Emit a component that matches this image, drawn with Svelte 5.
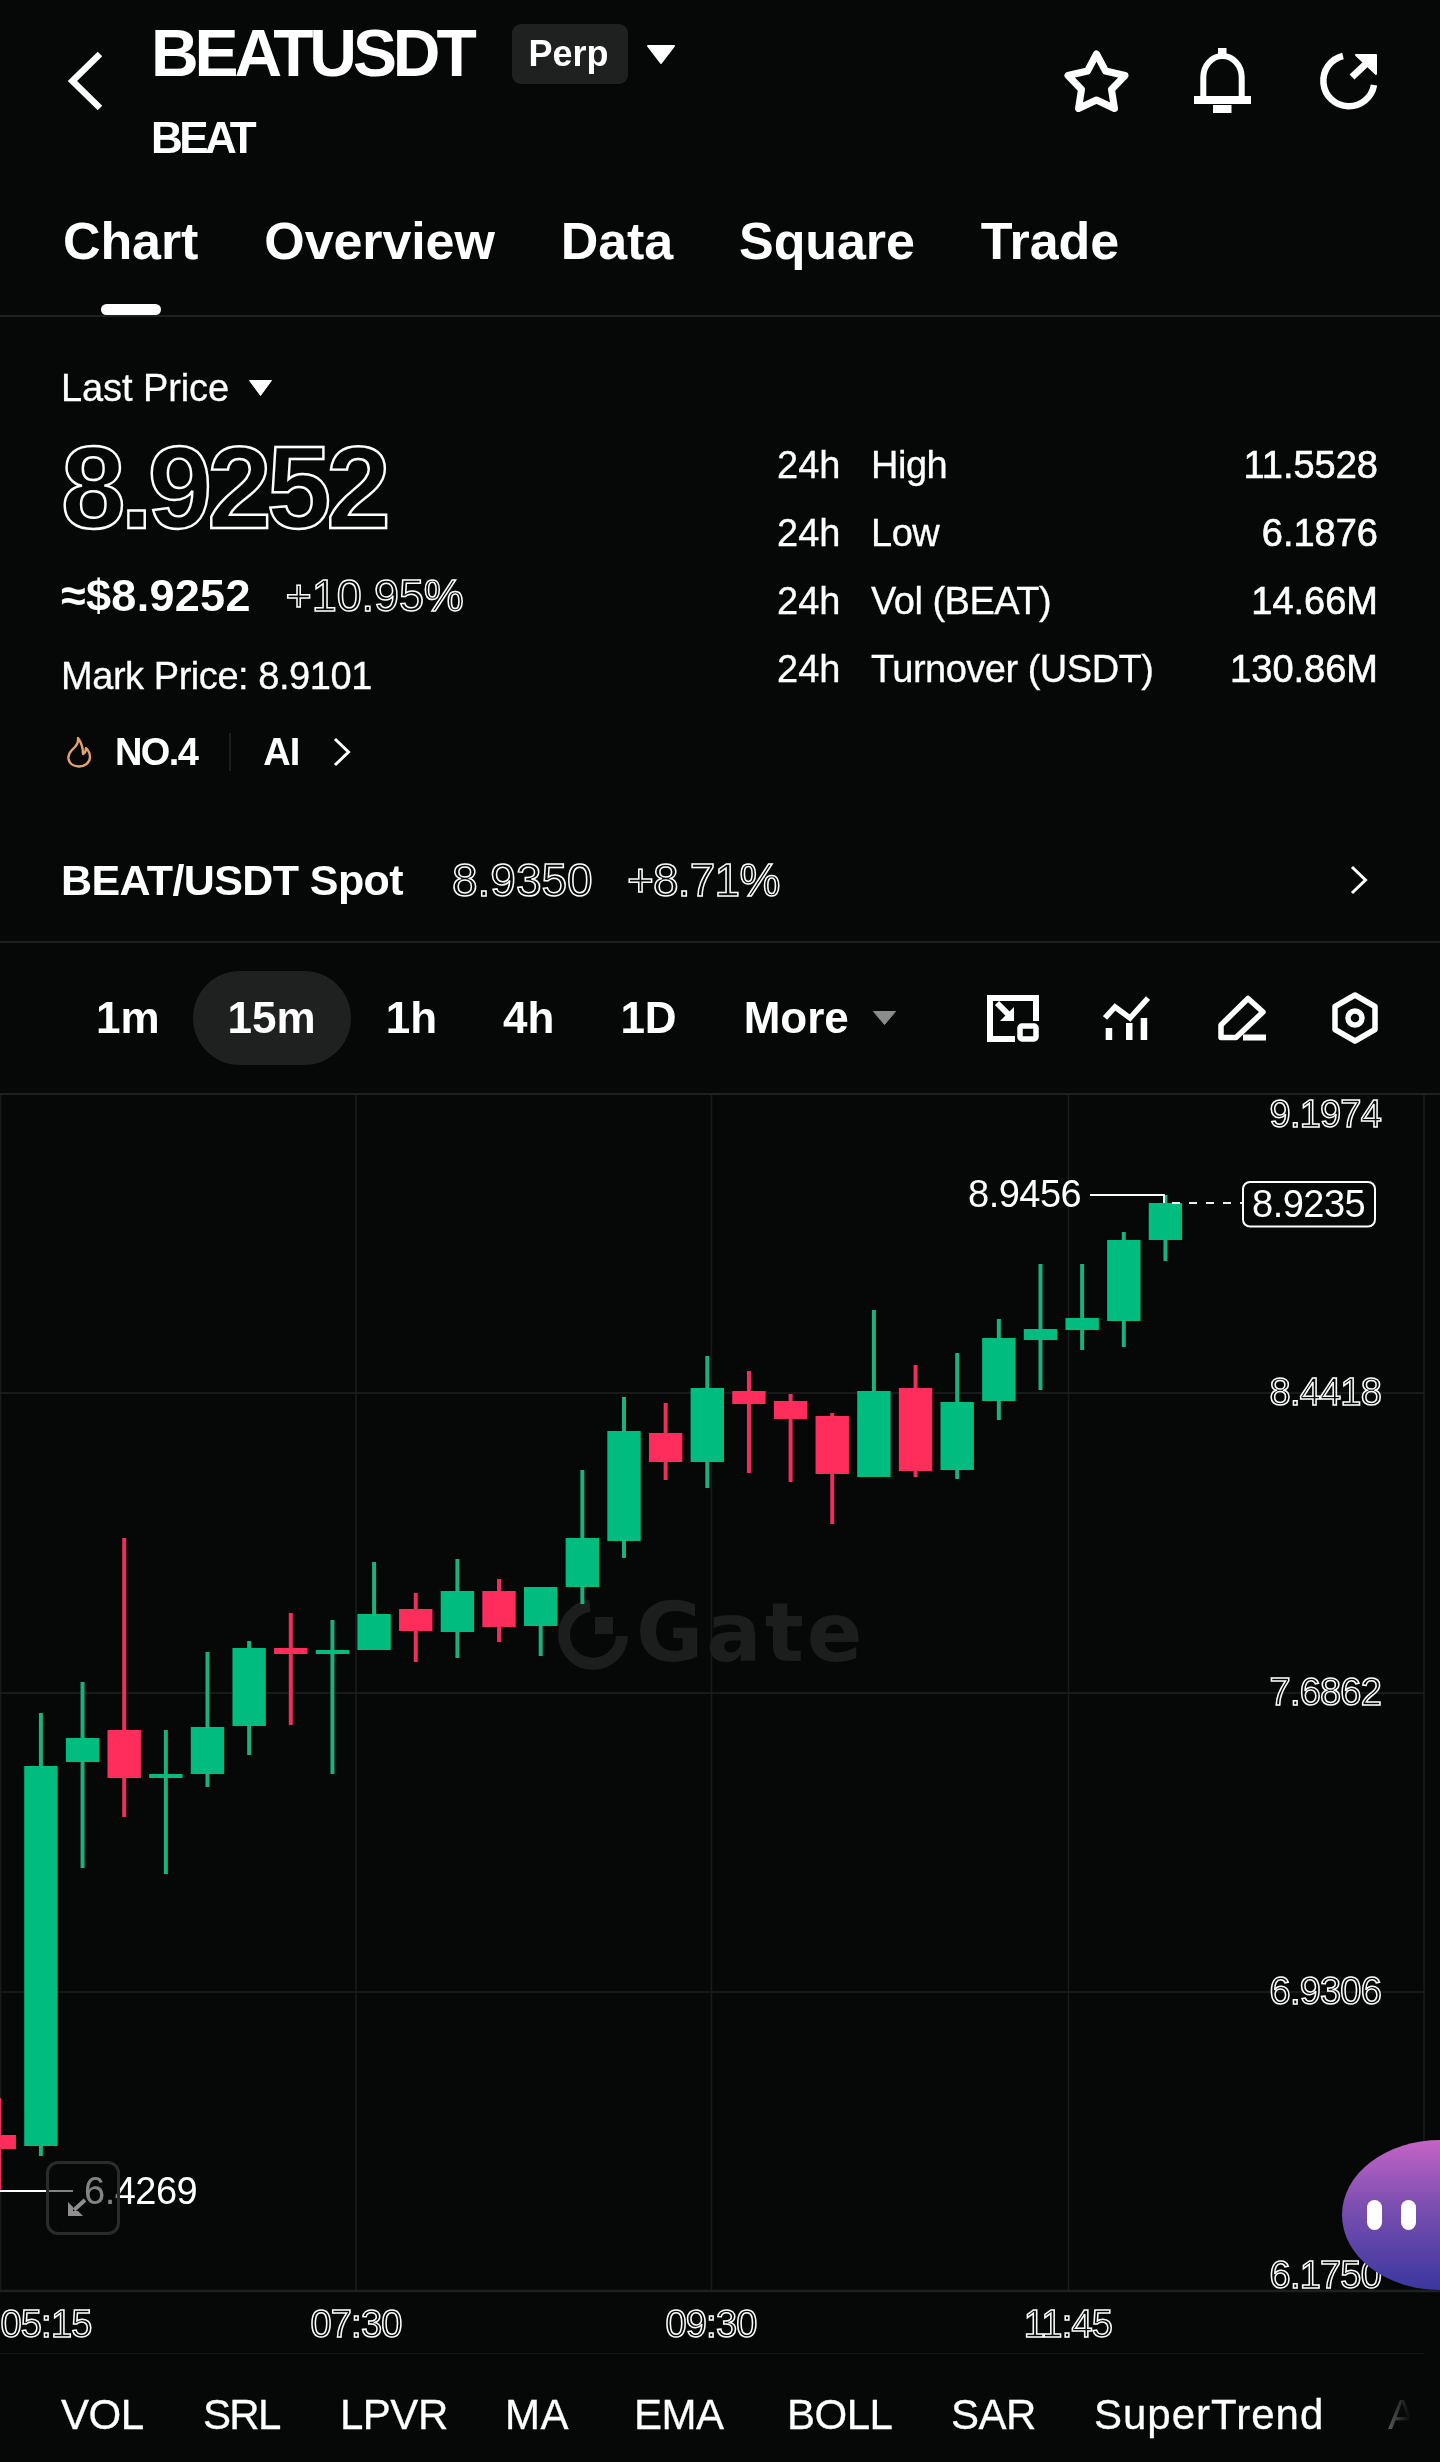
<script lang="ts">
  const tabs = ['Chart', 'Overview', 'Data', 'Square', 'Trade'];
  const stats = [
    { label: 'High', value: '11.5528' },
    { label: 'Low', value: '6.1876' },
    { label: 'Vol (BEAT)', value: '14.66M' },
    { label: 'Turnover (USDT)', value: '130.86M' }
  ];
  const periods = ['1m', '15m', '1h', '4h', '1D'];
  const indicators = ['VOL', 'SRL', 'LPVR', 'MA', 'EMA', 'BOLL', 'SAR', 'SuperTrend'];

  // y values are page pixels: [wick top, body top, body bottom, wick bottom, red?]
  const candles: [number, number, number, number, boolean][] = [
    [2098, 2135, 2149, 2190, true],
    [1713, 1766, 2146, 2156, false],
    [1682, 1738, 1762, 1868, false],
    [1538, 1730, 1778, 1817, true],
    [1730, 1774, 1778, 1874, false],
    [1652, 1727, 1774, 1787, false],
    [1641, 1648, 1726, 1755, false],
    [1613, 1648, 1654, 1725, true],
    [1620, 1650, 1654, 1774, false],
    [1562, 1614, 1650, 1650, false],
    [1593, 1609, 1631, 1662, true],
    [1559, 1591, 1632, 1658, false],
    [1579, 1591, 1627, 1642, true],
    [1587, 1587, 1626, 1656, false],
    [1470, 1538, 1587, 1604, false],
    [1397, 1431, 1541, 1558, false],
    [1403, 1433, 1462, 1480, true],
    [1356, 1388, 1462, 1488, false],
    [1371, 1391, 1404, 1473, true],
    [1394, 1401, 1419, 1482, true],
    [1413, 1416, 1474, 1524, true],
    [1310, 1391, 1477, 1477, false],
    [1365, 1388, 1471, 1477, true],
    [1353, 1402, 1470, 1479, false],
    [1319, 1338, 1401, 1420, false],
    [1264, 1329, 1340, 1390, false],
    [1264, 1318, 1330, 1350, false],
    [1232, 1240, 1321, 1347, false],
    [1195, 1203, 1240, 1261, false]
  ];
  const candleX = (i: number) => -0.75 + 41.65 * i;

  const gridX = [0.5, 356, 711.5, 1068.5, 1424];
  const gridY = [1393, 1693, 1992];
  const prices = [
    { text: '9.1974', y: 1127 },
    { text: '8.4418', y: 1405 },
    { text: '7.6862', y: 1705 },
    { text: '6.9306', y: 2004 },
    { text: '6.1750', y: 2288 }
  ];
  const times = [
    { text: '05:15', x: 46 },
    { text: '07:30', x: 356 },
    { text: '09:30', x: 711 },
    { text: '11:45', x: 1068 }
  ];
</script>

<div class="page">
  <header>
    <div class="top">
      <svg class="back" width="34" height="60" viewBox="0 0 34 60"><path d="M32 3 L4.5 30 L32 57" fill="none" stroke="#fff" stroke-width="6.5" /></svg>
      <div class="title">
        <h1>BEATUSDT</h1>
        <div class="coin">BEAT</div>
      </div>
      <span class="badge">Perp</span>
      <svg class="caret" width="30" height="21" viewBox="0 0 30 21"><path d="M2 2 H28 L15 19 Z" fill="#fff" stroke="#fff" stroke-width="2" stroke-linejoin="round" /></svg>
      <div class="actions">
        <svg width="65" height="62" viewBox="0 0 65 62"><path d="M32.5 4 L41.5 21 L61 25.5 L47.5 39.5 L50.5 58.5 L32.5 50 L14.5 58.5 L17.5 39.5 L4 25.5 L23.5 21 Z" fill="none" stroke="#fff" stroke-width="7" stroke-linejoin="round" /></svg>
        <svg width="57" height="65" viewBox="0 0 57 65">
          <rect x="24" y="0" width="8.5" height="8" fill="#fff" />
          <path d="M9.3 49 V29 A19.2 21 0 0 1 47.7 29 V49" fill="none" stroke="#fff" stroke-width="6" />
          <rect x="0" y="48" width="57" height="8" fill="#fff" />
          <rect x="19" y="57" width="18.5" height="8" fill="#fff" />
        </svg>
        <svg class="share" width="59" height="58" viewBox="0 0 59 58">
          <path d="M24 4 A25.5 25.5 0 1 0 55 33" fill="none" stroke="#fff" stroke-width="6.5" />
          <path d="M33 25 L50 9" stroke="#fff" stroke-width="7" />
          <path d="M37 3 H57 V22 Z" fill="#fff" stroke="#fff" stroke-width="2" stroke-linejoin="round" />
        </svg>
      </div>
    </div>
    <nav>
      {#each tabs as tab, i}
        <span class="tab" class:active={i === 0}>{tab}</span>
      {/each}
    </nav>
  </header>

  <section class="stats">
    <div class="columns">
      <div class="left">
        <div class="last">Last Price
          <svg width="25" height="18" viewBox="0 0 25 18"><path d="M1.5 1.5 H23.5 L12.5 16.5 Z" fill="#fff" stroke="#fff" stroke-linejoin="round" /></svg>
        </div>
        <div class="price">8.9252</div>
        <div class="fiat">≈$8.9252 <span class="change">+10.95%</span></div>
        <div class="mark">Mark Price: 8.9101</div>
        <div class="rank">
          <svg class="flame" width="26" height="32" viewBox="0 0 26 32"><path d="M12 2 C13 8 9 11 6 14 C3 17 2 20 2.5 23 C3.5 28 8 30.5 13 30.5 C18.5 30.5 24 27 24 21 C24 17 22 14 20 12 C20 15 19 17 17 18 C17 12 15 6 12 2 Z" fill="none" stroke="#e5a271" stroke-width="2.4" stroke-linejoin="round" /></svg>
          <span class="no">NO.4</span>
          <span class="sep"></span>
          <span class="ai">AI</span>
          <svg width="18" height="30" viewBox="0 0 18 30"><path d="M2 2 L15.5 15 L2 28" fill="none" stroke="#fff" stroke-width="3" /></svg>
        </div>
      </div>
      <div class="right">
        {#each stats as row}
          <div class="row">
            <span class="period">24h</span>
            <span class="label">{row.label}</span>
            <span class="value">{row.value}</span>
          </div>
        {/each}
      </div>
    </div>
    <div class="spot">
      <span class="pair">BEAT/USDT Spot</span>
      <span class="spot-price">8.9350</span>
      <span class="spot-change">+8.71%</span>
      <svg width="18" height="30" viewBox="0 0 18 30"><path d="M2 2 L15.5 15 L2 28" fill="none" stroke="#fff" stroke-width="3" /></svg>
    </div>
  </section>

  <section class="toolbar">
    {#each periods as p, i}
      <span class="period-btn" class:on={i === 1}>{p}</span>
    {/each}
    <span class="more">More
      <svg width="25" height="16" viewBox="0 0 25 16"><path d="M1.5 1.5 H23.5 L12.5 14.5 Z" fill="#8c8c8c" stroke="#8c8c8c" stroke-linejoin="round" /></svg>
    </span>
    <div class="tools">
      <svg width="52" height="47" viewBox="0 0 52 47">
        <path d="M49 26 V3 H3 V44 H28" fill="none" stroke="#fff" stroke-width="6" />
        <rect x="33" y="31" width="16" height="13" rx="2" fill="none" stroke="#fff" stroke-width="5.5" />
        <path d="M10 8 L24 22" stroke="#fff" stroke-width="6" />
        <path d="M27 12 V26 H13 Z" fill="#fff" />
      </svg>
      <svg class="lines" width="47" height="45" viewBox="0 0 47 45">
        <path d="M2 22 L12 11 L27 22 L45 2" fill="none" stroke="#fff" stroke-width="5.5" />
        <rect x="2.7" y="32" width="6.5" height="12" fill="#fff" />
        <rect x="23" y="27" width="6.5" height="17" fill="#fff" />
        <rect x="37.7" y="22" width="6.5" height="22" fill="#fff" />
      </svg>
      <svg width="48" height="46" viewBox="0 0 48 46">
        <path d="M3 42.5 V30 L30 3.5 L45 17 L18 42.5 Z" fill="none" stroke="#fff" stroke-width="5.5" stroke-linejoin="round" />
        <rect x="25" y="39.5" width="23" height="6" fill="#fff" />
      </svg>
      <svg width="46" height="52" viewBox="0 0 46 52">
        <path d="M23 3 L43 14.5 V37.5 L23 49 L3 37.5 V14.5 Z" fill="none" stroke="#fff" stroke-width="5.5" stroke-linejoin="round" />
        <circle cx="23" cy="26" r="7" fill="none" stroke="#fff" stroke-width="5.5" />
      </svg>
    </div>
  </section>

  <section class="chart">
    <svg width="1440" height="1261" viewBox="0 1093 1440 1261">
      {#each gridX as x}
        <line x1={x} x2={x} y1="1093" y2="2291" stroke="#1a1c1c" stroke-width="1.5" />
      {/each}
      {#each gridY as y}
        <line x1="0" x2="1424" y1={y} y2={y} stroke="#1f2121" stroke-width="1.5" />
      {/each}
      <line x1="0" x2="1440" y1="1094" y2="1094" stroke="#1e2020" stroke-width="2" />
      <line x1="0" x2="1440" y1="2291" y2="2291" stroke="#1e2020" stroke-width="2.5" />
      <line x1="0" x2="1424" y1="2354" y2="2354" stroke="#171919" stroke-width="1.5" />

      <!-- watermark -->
      <path d="M590 1606 A29 29 0 1 0 622 1636" fill="none" stroke="#1c1e1e" stroke-width="12" />
      <rect x="595" y="1617" width="18" height="17" fill="#1c1e1e" />
      <text class="mark-text" x="636" y="1661">Gate</text>

      {#each candles as [hi, top, bottom, lo, red], i}
        <rect x={candleX(i) - 2} y={hi} width="4" height={lo - hi} fill={red ? '#ec2f5c' : '#1cb07c'} />
        <rect x={candleX(i) - 16.7} y={top} width="33.4" height={bottom - top} fill={red ? '#ff2d5b' : '#00bc7e'} />
      {/each}

      {#each prices as p}
        <text class="axis" x="1381" y={p.y} text-anchor="end">{p.text}</text>
      {/each}
      {#each times as t}
        <text class="axis" x={t.x} y="2337" text-anchor="middle">{t.text}</text>
      {/each}

      <text class="note" x="968" y="1207">8.9456</text>
      <path d="M1090 1195 H1164 V1203" fill="none" stroke="#fff" stroke-width="1.8" />
      <line x1="1172" x2="1242" y1="1203" y2="1203" stroke="#eee" stroke-width="2" stroke-dasharray="8 9" />
      <rect x="1243" y="1182" width="132" height="44.5" rx="7" fill="#060808" stroke="#fff" stroke-width="2" />
      <text class="note" x="1252" y="1217">8.9235</text>

      <line x1="0" x2="73" y1="2191" y2="2191" stroke="#fff" stroke-width="1.8" />
      <text class="note" x="84" y="2204">6.4269</text>
    </svg>

    <div class="expand">
      <svg width="20" height="19" viewBox="0 0 20 19">
        <path d="M18 2 L7 12" stroke="#8f8f8f" stroke-width="4" />
        <path d="M1 4 V18 H16 L11 13 H6 V9 Z" fill="#8f8f8f" />
      </svg>
    </div>
    <div class="bot"><i></i><i></i></div>
  </section>

  <footer>
    {#each indicators as name}
      <span>{name}</span>
    {/each}
    <span class="cut">A</span>
  </footer>
</div>

<style>
  :global(body) {
    background: #060808;
  }

  .page {
    position: relative;
    width: 1440px;
    height: 2462px;
    overflow: hidden;
    background: #060808;
    color: #fff;
    font-family: 'Liberation Sans', Arial, sans-serif;
    opacity: .999;
  }

  svg {
    display: block;
    flex: none;
  }

  /* header */
  header {
    height: 317px;
    border-bottom: 2px solid #1e2020;
    box-sizing: border-box;
  }

  .top {
    display: flex;
    align-items: flex-start;
    height: 163px;
    padding: 20px 62px 0 68px;
    box-sizing: border-box;
  }

  .back {
    margin: 31px 49px 0 0;
  }

  h1 {
    margin: 0;
    font-size: 66px;
    line-height: 66px;
    font-weight: 700;
    letter-spacing: -4.1px;
  }

  .coin {
    margin-top: 27px;
    font-size: 44px;
    line-height: 50px;
    font-weight: 700;
    letter-spacing: -3.6px;
  }

  .title {
    width: 326px;
    margin-right: 35px;
  }

  .badge {
    width: 116px;
    height: 60px;
    margin-top: 4px;
    padding-right: 3px;
    box-sizing: border-box;
    border-radius: 9px;
    background: #1f2120;
    font-size: 36px;
    line-height: 60px;
    font-weight: 700;
    text-align: center;
  }

  .caret {
    margin: 24px 0 0 18px;
  }

  .actions {
    display: flex;
    align-items: center;
    gap: 65px;
    margin: 28px 0 0 auto;
  }

  .share {
    margin-left: 3px;
  }

  nav {
    display: flex;
    gap: 66px;
    padding: 48px 0 0 63px;
  }

  .tab {
    position: relative;
    font-size: 52px;
    line-height: 60px;
    font-weight: 700;
    letter-spacing: -.1px;
  }

  .tab.active::after {
    content: '';
    position: absolute;
    left: 38px;
    top: 93px;
    width: 60px;
    height: 11px;
    border-radius: 6px;
    background: #fff;
  }

  /* stats */
  .stats {
    height: 626px;
    padding: 47px 62px 0 61px;
    box-sizing: border-box;
    border-bottom: 2px solid #1e2020;
  }

  .columns {
    display: flex;
    justify-content: space-between;
  }

  .last {
    display: flex;
    align-items: center;
    gap: 19px;
    margin-top: 1px;
    font-size: 38px;
    line-height: 46px;
    letter-spacing: -.1px;
    -webkit-text-stroke: .3px #fff;
  }

  .price {
    margin-top: 19px;
    font-size: 116px;
    line-height: 116px;
    font-weight: 700;
    letter-spacing: -5px;
    color: #060808;
    -webkit-text-stroke: 2.4px #fff;
  }

  .fiat {
    margin-top: 23px;
    font-size: 45px;
    line-height: 54px;
    font-weight: 700;
    letter-spacing: .3px;
  }

  .change {
    margin-left: 22px;
    font-weight: 400;
    letter-spacing: -.1px;
    color: #060808;
    -webkit-text-stroke: 1.5px #fff;
  }

  .mark {
    margin-top: 30px;
    font-size: 38px;
    line-height: 46px;
    letter-spacing: -.45px;
    -webkit-text-stroke: .3px #fff;
  }

  .rank {
    display: flex;
    align-items: center;
    margin-top: 30px;
    height: 46px;
    font-size: 38px;
    line-height: 46px;
  }

  .flame {
    margin-left: 5px;
  }

  .no {
    margin-left: 23px;
    font-weight: 700;
    letter-spacing: -1.6px;
  }

  .sep {
    width: 2px;
    height: 38px;
    margin: 0 32px;
    background: #1c1e1e;
  }

  .ai {
    font-weight: 700;
    margin-right: 34px;
    letter-spacing: -1px;
  }

  .right {
    width: 601px;
    margin-top: 78px;
    display: flex;
    flex-direction: column;
    gap: 22px;
  }

  .row {
    display: flex;
    font-size: 38px;
    line-height: 46px;
    -webkit-text-stroke: .3px #fff;
  }

  .period {
    width: 94px;
  }

  .label {
    letter-spacing: -.5px;
  }

  .value {
    margin-left: auto;
    -webkit-text-stroke: .6px #fff;
  }

  .spot {
    display: flex;
    align-items: center;
    margin-top: 78px;
    line-height: 54px;
  }

  .pair {
    width: 391px;
    font-size: 43px;
    font-weight: 700;
    letter-spacing: -.6px;
  }

  .spot-price,
  .spot-change {
    font-size: 46px;
    color: #060808;
    -webkit-text-stroke: 1.5px #fff;
  }

  .spot-price {
    width: 175px;
  }

  .spot-change {
    letter-spacing: -.8px;
  }

  .spot svg {
    margin-left: auto;
    margin-right: 10px;
  }

  /* toolbar */
  .toolbar {
    display: flex;
    align-items: center;
    height: 150px;
    padding: 0 62px 0 63px;
    box-sizing: border-box;
  }

  .period-btn {
    padding: 0 33px;
    height: 94px;
    font-size: 44px;
    line-height: 94px;
    font-weight: 700;
    border-radius: 47px;
  }

  .period-btn.on {
    padding: 0 35px;
    background: #1f2120;
    margin-right: 2px;
  }

  .more {
    display: flex;
    align-items: center;
    gap: 23px;
    margin-left: 34px;
    font-size: 44px;
    font-weight: 700;
  }

  .tools {
    display: flex;
    align-items: center;
    gap: 66px;
    margin-left: auto;
  }

  .lines {
    margin: 0 2px 0 -2px;
  }

  /* chart */
  .chart {
    position: relative;
    height: 1261px;
  }

  .axis {
    font-size: 38px;
    letter-spacing: -.8px;
    fill: #060808;
    stroke: #fff;
    stroke-width: 1.5px;
  }

  .note {
    font-size: 38px;
    letter-spacing: -.5px;
    fill: #fff;
  }

  .mark-text {
    font-family: 'DejaVu Sans', sans-serif;
    font-size: 82px;
    font-weight: 700;
    letter-spacing: 3px;
    fill: #1c1e1e;
  }

  .expand {
    position: absolute;
    left: 46px;
    top: 1068px;
    width: 74px;
    height: 74px;
    box-sizing: border-box;
    display: flex;
    align-items: flex-end;
    padding: 0 0 15px 18px;
    border: 3px solid #2a2c2c;
    border-radius: 12px;
    background: rgba(6, 8, 8, .5);
  }

  .bot {
    position: absolute;
    left: 1342px;
    top: 1047px;
    width: 98px;
    height: 150px;
    display: flex;
    gap: 19px;
    align-items: center;
    padding-left: 25px;
    box-sizing: border-box;
    border-radius: 98px 0 0 98px / 75px 0 0 75px;
    background: linear-gradient(180deg, #c463c6 0%, #7a4fb0 45%, #3a379f 100%);
  }

  .bot i {
    width: 15px;
    height: 30px;
    border-radius: 8px;
    background: #fff;
  }

  /* indicators */
  footer {
    display: grid;
    grid-template-columns: 142px 137px 165px 129px 153px 164px 143px 294px 30px;
    align-items: center;
    height: 108px;
    padding: 14px 0 0 61px;
    box-sizing: border-box;
    font-size: 42px;
    letter-spacing: -.5px;
    -webkit-text-stroke: .3px #fff;
  }

  footer span:nth-child(2) {
    letter-spacing: -1.7px;
  }

  footer span:nth-child(4) {
    letter-spacing: .5px;
  }

  footer span:nth-child(8) {
    letter-spacing: 1px;
  }

  .cut {
    background: linear-gradient(90deg, #5a5c5c, #060808 75%);
    -webkit-background-clip: text;
    background-clip: text;
    color: transparent;
    -webkit-text-stroke: 0;
  }
</style>
